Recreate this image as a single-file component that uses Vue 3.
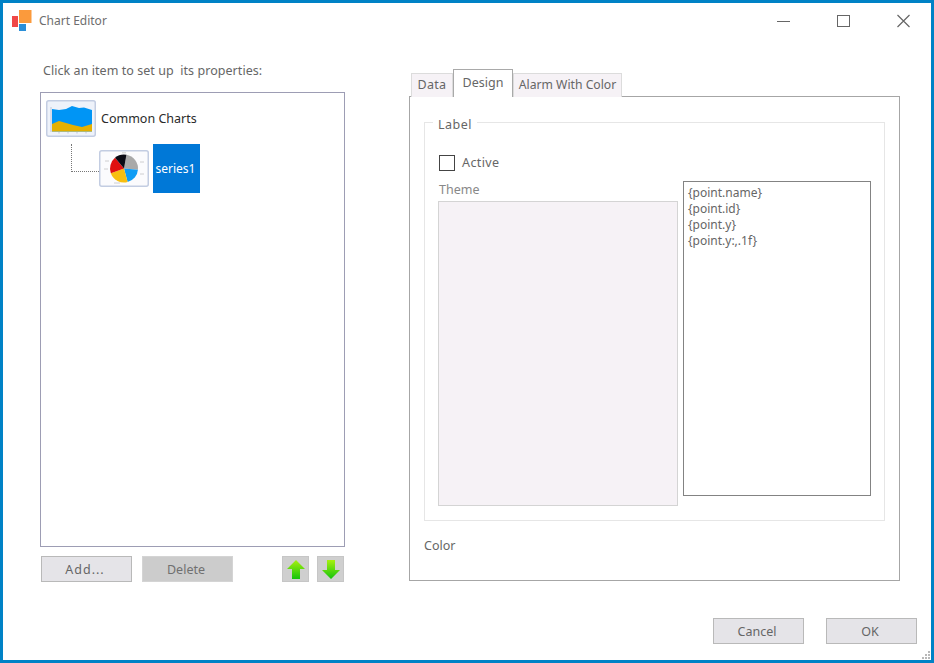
<script setup>
const formats = ['{point.name}', '{point.id}', '{point.y}', '{point.y:,.1f}']
</script>

<template>
  <div class="window">
    <header class="titlebar">
      <svg class="logo" width="20" height="21" viewBox="0 0 20 21">
        <rect x="0" y="6" width="6" height="11" fill="#f04848" />
        <rect x="7" y="0" width="12.500" height="13" fill="#fb9a3c" />
        <rect x="7" y="14" width="7" height="7" fill="#2a8fd8" />
      </svg>
      <span class="title">Chart Editor</span>
      <div class="controls">
        <svg width="60" height="14" viewBox="0 0 60 14"><path d="M0 7.500H13" stroke="#666" stroke-width="1" /></svg>
        <svg width="60" height="14" viewBox="0 0 60 14"><rect x="0.500" y="1.500" width="12" height="11" fill="none" stroke="#666" /></svg>
        <svg width="13" height="14" viewBox="0 0 13 14"><path d="M0.500 1L12.500 13M12.500 1L0.500 13" stroke="#666" stroke-width="1.200" fill="none" /></svg>
      </div>
    </header>

    <main class="main">
      <section class="left">
        <p class="prompt">Click an item to set up&nbsp; its properties:</p>
        <div class="tree">
          <div class="root-row">
            <svg class="thumb" width="50" height="37" viewBox="0 0 50 37">
              <rect x="0.750" y="0.750" width="48.500" height="35.500" rx="2" fill="#eef2fa" stroke="#c3cde2" stroke-width="1.500" />
              <path d="M6 9L13 10L20 9L26 6L33 8L38 7.500L46 10V31.500H6Z" fill="#0095f5" />
              <path d="M6 24L13 21L20 23L27 25L36 27L46 24V31.500H6Z" fill="#e4b000" />
              <path d="M5 7V32M13 32V33.500M22 32V33.500M31 32V33.500M40 32V33.500" stroke="#aab4c8" stroke-width="0.700" fill="none" />
            </svg>
            <span class="root-label">Common Charts</span>
          </div>
          <div class="child-row">
            <span class="connector"></span>
            <svg class="thumb" width="50" height="37" viewBox="0 0 50 37">
              <rect x="0.750" y="0.750" width="48.500" height="35.500" rx="2" fill="#fbfbfd" stroke="#c3cde2" stroke-width="1.500" />
              <path d="M25 18.500L27.430 4.720A14 14 0 0 1 38.950 19.720Z" fill="#a9a9a9" />
              <path d="M25 18.500L38.950 19.720A14 14 0 0 1 28.620 32.020Z" fill="#0f9df5" />
              <path d="M25 18.500L28.620 32.020A14 14 0 0 1 11.840 23.290Z" fill="#f7bf10" />
              <path d="M25 18.500L11.840 23.290A14 14 0 0 1 16 7.780Z" fill="#e01010" />
              <path d="M25 18.500L16 7.780A14 14 0 0 1 27.430 4.720Z" fill="#0a0a14" />
              <path d="M6 11H10M5 19H9M41 12H45M41 24H45M15 33H21M23 2.800H27" stroke="#c4c4c4" stroke-width="0.800" fill="none" />
            </svg>
            <span class="selected">series1</span>
          </div>
        </div>
        <div class="tree-actions">
          <button class="btn wide" type="button">Add...</button>
          <button class="btn disabled" type="button">Delete</button>
          <button class="arrow first" type="button" aria-label="Move up">
            <svg width="18" height="19" viewBox="0 0 18 19">
              <defs>
                <linearGradient id="green" x1="0" y1="0" x2="0" y2="1">
                  <stop offset="0" stop-color="#a8f010" />
                  <stop offset="1" stop-color="#14c40a" />
                </linearGradient>
              </defs>
              <path d="M9 0L18 9H13V19H5V9H0Z" fill="url(#green)" />
            </svg>
          </button>
          <button class="arrow" type="button" aria-label="Move down">
            <svg width="18" height="19" viewBox="0 0 18 19">
              <path d="M5 0H13V10H18L9 19L0 10H5Z" fill="url(#green)" />
            </svg>
          </button>
        </div>
      </section>

      <section class="right">
        <div class="tabs">
          <span class="tab tab-data">Data</span>
          <span class="tab tab-design">Design</span>
          <span class="tab tab-alarm">Alarm With Color</span>
        </div>
        <div class="panel">
          <div class="group">
            <span class="legend">Label</span>
            <label class="active-row">
              <span class="check"></span>
              <span class="active-text">Active</span>
            </label>
            <div class="columns">
              <div class="theme-col">
                <div class="theme-label">Theme</div>
                <div class="theme-box"></div>
              </div>
              <ul class="format-list">
                <li v-for="f in formats" :key="f">{{ f }}</li>
              </ul>
            </div>
          </div>
          <div class="color-label">Color</div>
        </div>
      </section>
    </main>

    <footer class="footer">
      <button class="btn" type="button">Cancel</button>
      <button class="btn" type="button">OK</button>
    </footer>

    <svg class="grip" width="9" height="9" viewBox="0 0 9 9" fill="#b8b8b8">
      <rect x="6" y="0" width="2" height="2" />
      <rect x="3" y="3" width="2" height="2" />
      <rect x="6" y="3" width="2" height="2" />
      <rect x="0" y="6" width="2" height="2" />
      <rect x="3" y="6" width="2" height="2" />
      <rect x="6" y="6" width="2" height="2" />
    </svg>
  </div>
</template>

<style scoped>
.window {
  position: relative;
  box-sizing: border-box;
  width: 934px;
  height: 663px;
  border: 3px solid #0082c6;
  background: #fff;
  display: flex;
  flex-direction: column;
  font-family: "Noto Sans", "DejaVu Sans", sans-serif;
  font-size: 12.5px;
  color: #666;
  overflow: hidden;
}
.titlebar {
  height: 34px;
  flex: none;
  display: flex;
  align-items: flex-start;
  padding-left: 9px;
}
.logo { margin-top: 7px; flex: none; }
.title { margin: 9px 0 0 7px; line-height: 18px; color: #6e6e6e; font-size: 12px; }
.controls {
  margin-left: auto;
  margin-right: 21px;
  margin-top: 11px;
  display: flex;
  align-items: flex-start;
}
.controls svg { display: block; }
.main { flex: 1; display: flex; min-height: 0; }
.left { width: 305px; margin-left: 37px; padding-top: 25px; flex: none; }
.prompt { margin: 0 0 12px 3px; line-height: 18px; letter-spacing: 0.05px; }
.tree {
  box-sizing: border-box;
  height: 455px;
  border: 1px solid #9d9db4;
  padding: 7px 5px;
}
.root-row { display: flex; align-items: center; height: 37px; }
.thumb { display: block; flex: none; }
.root-label { margin-left: 5px; color: #2a2a2a; }
.child-row { display: flex; align-items: center; height: 49px; margin-top: 7px; padding-left: 25px; }
.connector {
  box-sizing: border-box;
  width: 28px;
  height: 28px;
  margin-top: -22px;
  border-left: 1px dotted #777;
  border-bottom: 1px dotted #777;
  flex: none;
}
.selected {
  margin-left: 4px;
  width: 47px;
  height: 49px;
  padding-right: 2px;
  box-sizing: border-box;
  background: #0078d7;
  color: #fff;
  text-align: center;
  font-size: 12px;
  line-height: 49px;
}
.tree-actions { display: flex; margin: 9px 1px 0; height: 26px; }
.btn {
  box-sizing: border-box;
  width: 91px;
  height: 26px;
  padding: 0 3px 0 0;
  border: 1px solid #b9b9b9;
  background: #e5e4e8;
  color: #666;
  font: inherit;
  line-height: 26px;
}
.btn.wide { letter-spacing: 1px; }
.btn.disabled { margin-left: 10px; background: #cccccc; border-color: #d4d4d4; color: #707070; }
.arrow {
  box-sizing: border-box;
  width: 27px;
  height: 26px;
  padding: 0;
  margin-left: 8px;
  border: 1px solid #c6c6c6;
  background: #cfcfcf;
  display: flex;
  align-items: center;
  justify-content: center;
}
.arrow.first { margin-left: 49px; }
.right { width: 491px; margin-left: 64px; padding-top: 32px; flex: none; }
.tabs { display: flex; align-items: flex-end; height: 28px; padding-left: 2px; margin-bottom: -1px; position: relative; }
.tab {
  box-sizing: border-box;
  height: 24px;
  border: 1px solid #dcdcdc;
  border-bottom: none;
  background: #f6f2f6;
  text-align: center;
  line-height: 22px;
}
.tab-data { width: 42px; letter-spacing: 0.3px; }
.tab-design {
  width: 60px;
  height: 28px;
  background: #fff;
  border-color: #a9a9a9;
  line-height: 26px;
  position: relative;
  z-index: 1;
}
.tab-alarm { width: 109px; font-size: 12.2px; }
.panel {
  box-sizing: border-box;
  height: 485px;
  border: 1px solid #a6a6a6;
  padding: 25px 14px 0;
}
.group {
  position: relative;
  box-sizing: border-box;
  height: 399px;
  border: 1px solid #e6e6e6;
}
.legend {
  position: absolute;
  left: 8px;
  top: -7px;
  padding: 0 5px;
  background: #fff;
  letter-spacing: 0.5px;
  line-height: 18px;
}
.active-row { display: flex; align-items: center; height: 16px; margin: 32px 0 0 14px; gap: 7px; }
.active-text { letter-spacing: 0.4px; margin-top: -2px; }
.check { box-sizing: border-box; width: 16px; height: 16px; border: 1px solid #444; background: #fff; }
.columns { display: flex; margin: 10px 0 0 13px; }
.theme-col { width: 240px; flex: none; }
.theme-label { height: 20px; line-height: 18px; color: #888; padding-left: 1px; }
.theme-box { box-sizing: border-box; height: 305px; background: #f6f2f6; border: 1px solid #d4d4d4; }
.format-list {
  box-sizing: border-box;
  width: 188px;
  height: 315px;
  margin: 0 0 0 5px;
  padding: 3px 4px;
  list-style: none;
  border: 1px solid #838383;
  font-size: 12px;
  line-height: 16px;
}
.color-label { margin-top: 16px; line-height: 18px; }
.footer {
  flex: none;
  display: flex;
  justify-content: flex-end;
  gap: 22px;
  padding: 0 14px 16px 0;
}
.grip { position: absolute; right: 0; bottom: 0; }
</style>

<style>
html, body { margin: 0; background: #fff; }
</style>
